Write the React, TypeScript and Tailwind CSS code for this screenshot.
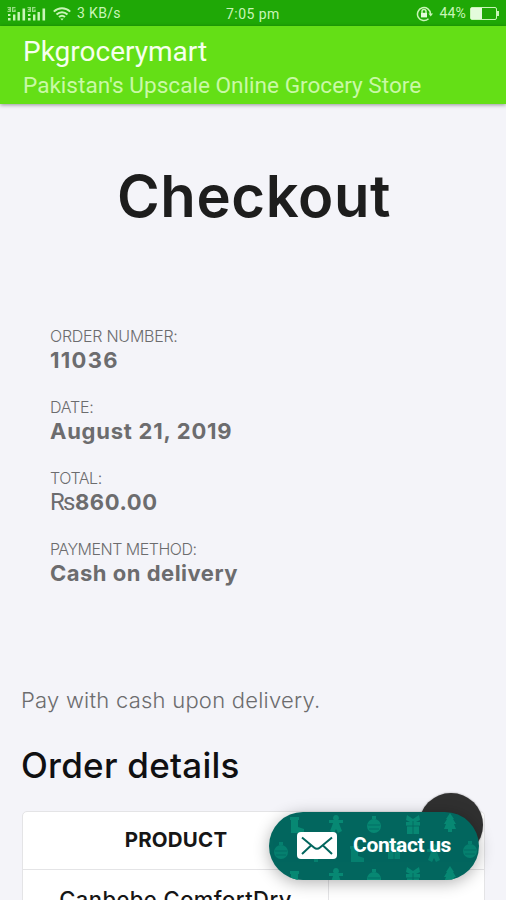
import React from "react";

const details = [
  { label: "ORDER NUMBER:", value: "11036", ls: "tracking-[-0.25px]", vs: "tracking-[1.3px]" },
  { label: "DATE:", value: "August 21, 2019", ls: "tracking-[-0.25px]", vs: "tracking-[0.75px]" },
  { label: "TOTAL:", value: "860.00", ls: "tracking-[-0.45px]", vs: "tracking-[0.6px]", rupee: true },
  { label: "PAYMENT METHOD:", value: "Cash on delivery", ls: "tracking-[-0.5px]", vs: "tracking-[0.5px]" },
];

function Signal() {
  return (
    <svg width="20" height="16" viewBox="0 0 20 16" fill="#c9f5b8">
      <path d="M.5 1h3.500v5H.5v-1.200h2V4H1V3h1.500v-.8h-2zM5 1h3.500v1.200H6.300v2.600h1V3.500h1.400V6H5z" opacity=".7" />
      <rect x="1" y="12" width="2.600" height="2.500" />
      <rect x="1" y="8" width="2.400" height="2" />
      <rect x="6" y="8.500" width="2.400" height="6" />
      <rect x="10.500" y="6" width="2.400" height="8.500" />
      <rect x="15.500" y="2.500" width="2.600" height="12" />
    </svg>
  );
}

function Wifi() {
  return (
    <svg width="18" height="14" viewBox="0 0 18 14" fill="none" stroke="#c9f5b8" strokeWidth="2">
      <path d="M.8 4.6C5.500 .1 12.500 .1 17.200 4.600M3.500 7.500c3.200-3 7.800-3 11 0M6 10.100c1.800-1.600 4.200-1.600 6 0" />
      <path d="M7.300 11.500h3.400L9 13.500z" fill="#c9f5b8" stroke="none" />
    </svg>
  );
}

function RotationLock() {
  return (
    <svg width="18" height="16" viewBox="0 0 18 16" fill="none" stroke="#c9f5b8" strokeWidth="1.500">
      <path d="M12.500 12.800A6.500 6.500 0 1 1 14.500 8" />
      <rect x="5" y="6.800" width="6" height="4.600" fill="#e4fbdc" stroke="none" />
      <path d="M6 7V5.500a2 2 0 0 1 4 0V7" />
      <path d="M12.500 7.500h4.500l-2.300 3z" fill="#c9f5b8" stroke="none" />
    </svg>
  );
}

function Tree({ x, y }: { x: number; y: number }) {
  return <path transform={`translate(${x} ${y})`} d="M0-10l4 6H3l3 5H4l2 5H2v3h-4V6h-4l2-5h-2l3-5h-1z" />;
}
function Bauble({ x, y }: { x: number; y: number }) {
  return (
    <g transform={`translate(${x} ${y})`}>
      <path d="M-2-9h4v3h-4z" />
      <circle cy="1" r="7" />
      <path d="M-6 0H6M-5 4H5" stroke="#02665e" strokeWidth=".7" />
    </g>
  );
}
function Gift({ x, y }: { x: number; y: number }) {
  return (
    <g transform={`translate(${x} ${y})`}>
      <path d="M-6-9l6 4 6-4 1 5-4 2h4v4h-1v8h-12V2h-1v-4h4l-4-2z" />
      <path d="M0-3v13M-7 2H7" stroke="#02665e" strokeWidth=".8" />
    </g>
  );
}
function Gingerbread({ x, y }: { x: number; y: number }) {
  return <path transform={`translate(${x} ${y})`} d="M0-9q3 0 3 4l-1 1h5v3H3l1 3 2 5-4 2-2-4-2 4-4-2 2-5 1-3h-4v-3h5l-1-1q0-4 3-4z" />;
}
function Stocking({ x, y }: { x: number; y: number }) {
  return <path transform={`translate(${x} ${y})`} d="M-6-8h9v3H2v7l6 2v4H-5V-5h-1z" />;
}

function Pattern() {
  return (
    <svg className="absolute inset-0" width="210" height="68" viewBox="0 0 210 68" fill="#078873">
      <Stocking x={27} y={13} />
      <Gingerbread x={67} y={12} />
      <Bauble x={105} y={13} />
      <Gift x={144} y={12} />
      <Tree x={181} y={11} />
      <g opacity=".8">
        <Bauble x={12} y={39} />
        <Tree x={47} y={41} />
        <Stocking x={87} y={42} />
        <Gift x={125} y={37} />
        <Gingerbread x={165} y={41} />
        <Bauble x={201} y={38} />
      </g>
      <Stocking x={27} y={67} />
      <Gingerbread x={67} y={65} />
      <Bauble x={105} y={66} />
      <Gift x={144} y={64} />
      <Tree x={181} y={64} />
    </svg>
  );
}

export default function App() {
  return (
    <div className="relative h-[900px] w-[506px] overflow-hidden bg-[#f4f4f9] font-['Inter',sans-serif]">
      <div className="flex h-[26px] items-center bg-[#1fa806] pr-[7px] pl-[7px] pt-[2px] font-['Roboto',sans-serif] text-[14px] text-[#c9f5b8]">
        <div className="flex w-[219px] items-center pb-px">
          <Signal />
          <Signal />
          <span className="ml-[6px]"><Wifi /></span>
          <span className="ml-[6px] whitespace-nowrap tracking-[0.35px]">3 KB/s</span>
        </div>
        <span className="whitespace-nowrap tracking-[0.45px]">7:05 pm</span>
        <div className="flex flex-1 items-center justify-end pb-px">
          <RotationLock />
          <span className="ml-[5px] tracking-[0.2px]">44%</span>
          <div className="ml-[4px] flex h-[13px] w-[27px] rounded-[2px] border border-[#c9f5b8]">
            <div className="w-[11px] bg-[#e4fbdc]" />
          </div>
          <div className="h-[5px] w-[2px] bg-[#c9f5b8]" />
        </div>
      </div>
      <header className="h-[78px] bg-[#64df16] pl-[23px] font-['Roboto',sans-serif] shadow-[0_1px_4px_rgba(0,0,0,0.4)]">
        <div className="h-[44px] pt-[9px] text-[28px] leading-[34px] text-[#f6ffee]"><span>Pkgrocerymart</span></div>
        <div className="text-[22.6px] leading-[32px] text-[#c9f9a6]"><span>Pakistan's Upscale Online Grocery Store</span></div>
      </header>
      <h1 className="mt-[56px] pl-[117px] text-[58px] leading-[72px] font-semibold tracking-[0.6px] whitespace-nowrap text-[#1d1d1d]"><span>Checkout</span></h1>
      <ul className="mt-[92px] flex flex-col gap-[23px] pl-[50px] text-[#6c6c6e]">
        {details.map((d) => (
          <li key={d.label}>
            <div className={`text-[16px] leading-[24px] font-light ${d.ls}`}><span>{d.label}</span></div>
            <div className={`text-[22px] leading-[24px] font-bold ${d.vs}`}>
              {d.rupee && <span className="font-['Roboto',sans-serif] text-[24px] font-normal tracking-[-0.5px]">₨</span>}
              <span>{d.value}</span>
            </div>
          </li>
        ))}
      </ul>
      <p className="mt-[103px] pl-[21px] text-[22px] leading-[24px] font-light tracking-[0.24px] text-[#6c6c6e]"><span>Pay with cash upon delivery.</span></p>
      <h2 className="mt-[33px] pl-[21px] text-[35px] leading-[40px] font-medium tracking-[0.25px] text-[#101012]"><span>Order details</span></h2>
      <div className="mt-[26px] ml-[22px] w-[463px] rounded-t-[5px] border border-[#e4e4e6] bg-white text-[#161616]">
        <div className="flex h-[58px] items-center border-b border-[#e4e4e6]">
          <div className="w-[306px] pb-px text-center text-[20.5px] font-bold tracking-[0.2px]"><span>PRODUCT</span></div>
        </div>
        <div className="flex h-[60px]">
          <div className="w-[306px] border-r border-[#e4e4e6] pt-[14px] text-center text-[22px] leading-[30px] font-medium tracking-[0.45px]"><span>Canbebe ComfortDry</span></div>
        </div>
      </div>
      <div className="absolute top-[793px] left-[419px] h-[64px] w-[64px] rounded-full bg-[#303030] shadow-[0_0_2px_rgba(0,0,0,0.4)]" />
      <button className="absolute top-[812px] left-[269px] flex h-[68px] w-[210px] items-center overflow-hidden rounded-full bg-[#02665e] pl-[28px] shadow-[0_3px_16px_rgba(0,0,0,0.3)]">
        <Pattern />
        <svg className="relative mb-[2px]" width="40" height="27" viewBox="0 0 40 27">
          <rect width="40" height="27" rx="4" fill="#fff" />
          <path d="M5 5.500L17 15.500q3 2.500 6 0L35 5.500M5 22l9-8.500M35 22l-9-8.500" fill="none" stroke="#02665e" strokeWidth="2" />
        </svg>
        <span className="relative ml-[16px] font-['Roboto',sans-serif] text-[21px] font-bold tracking-[-0.35px] whitespace-nowrap text-white">Contact us</span>
      </button>
    </div>
  );
}
